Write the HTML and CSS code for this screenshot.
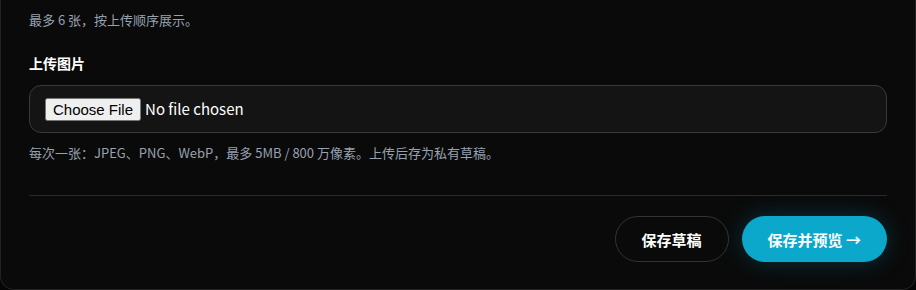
FILE: index.html
```html
<!DOCTYPE html>
<html lang="zh-CN">
<head>
  <meta charset="UTF-8" />
  <title>上传图片</title>
  <link rel="stylesheet" href="styles.css">
</head>
<body>

  <div class="editor-card">
    <p class="field-hint field-hint-top">最多 6 张，按上传顺序展示。</p>

    <!-- 图片上传 -->
    <div class="field">
      <label class="field-label" for="cover">上传图片</label>
      <div class="file-box">
        <input id="cover" type="file" accept="image/jpeg,image/png,image/webp">
      </div>
      <p class="field-hint">每次一张：JPEG、PNG、WebP，最多 5MB / 800 万像素。上传后存为私有草稿。</p>
    </div>

    <!-- 底部操作 -->
    <div class="actions">
      <button class="btn btn-ghost">保存草稿</button>
      <button class="btn btn-primary">保存并预览 →</button>
    </div>
  </div>

</body>
</html>
```

FILE: styles.css
```css
/* 页面 */
body {
  margin: 0;
  background: #050505;
  color: #eee;
  font-family: "Noto Sans CJK SC", "Noto Sans", sans-serif;
}

/* 卡片（顶部已滚出视口） */
.editor-card {
  height: 290px;
  box-sizing: border-box;
  padding: 10px 28px 26px;
  background: #0a0a0a;
  border: 1px solid #222;
  border-top: none;
  border-radius: 0 0 14px 14px;
}

.field-hint {
  margin: 0;
  font-size: 13px;
  line-height: 20px;
  color: #97a1b0;
}
.field-hint-top {
  margin-bottom: 23px;
}

.field-label {
  display: block;
  font-size: 14px;
  font-weight: 700;
  line-height: 20px;
  color: #fff;
  margin-bottom: 12px;
}

/* 文件输入框 */
.file-box {
  display: flex;
  align-items: center;
  height: 48px;
  box-sizing: border-box;
  padding: 0 15px;
  background: #141414;
  border: 1px solid #3a3a3a;
  border-radius: 12px;
  margin-bottom: 10px;
}
.file-box input {
  font-family: inherit;
  font-size: 15px;
  color: #fff;
}
.file-box input::file-selector-button {
  font-family: "Liberation Sans", Arial, sans-serif;
  font-size: 15px;
  margin-right: 4px;
}

/* 操作区 */
.actions {
  display: flex;
  justify-content: flex-end;
  gap: 13px;
  margin-top: 32px;
  padding-top: 20px;
  border-top: 1px solid #2a2a2a;
}

.btn {
  height: 46px;
  padding: 0 26px;
  border-radius: 23px;
  font-family: inherit;
  font-size: 15px;
  font-weight: 700;
  color: #fff;
  cursor: pointer;
}
.btn-ghost {
  background: transparent;
  border: 1px solid #333;
}
.btn-primary {
  background: #0ba8cc;
  border: none;
  box-shadow: 0 0 24px rgba(11, 168, 204, 0.25);
}
```
